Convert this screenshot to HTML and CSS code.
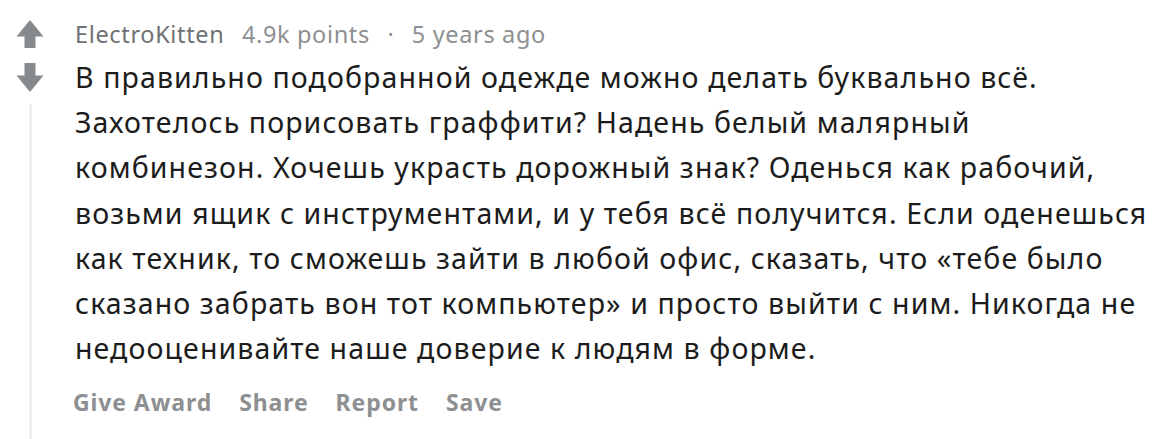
FILE: index.html
```html
<!DOCTYPE html>
<html lang="ru">
<head>
<meta charset="utf-8">
<link rel="stylesheet" href="styles.css">
</head>
<body>
<div class="comment">
  <div class="gutter">
    <div class="votes">
      <svg class="arrow" viewBox="0 0 28 28" width="28" height="28"><path d="M14 0 L27.5 16.5 L19.5 16.5 L19.5 28 L8.5 28 L8.5 16.5 L0.5 16.5 Z" fill="#878a8c"/></svg>
      <svg class="arrow" viewBox="0 0 28 29" width="28" height="29"><path d="M14 29 L27.5 12.5 L19.5 12.5 L19.5 0 L8.5 0 L8.5 12.5 L0.5 12.5 Z" fill="#878a8c"/></svg>
    </div>
    <div class="thread-line"></div>
  </div>
  <div class="main">
    <div class="meta">
      <span class="author">ElectroKitten</span>
      <span class="points">4.9k points</span>
      <span class="dot">·</span>
      <span class="time">5 years ago</span>
    </div>
    <p class="body">В правильно подобранной одежде можно делать буквально всё. Захотелось порисовать граффити? Надень белый малярный комбинезон. Хочешь украсть дорожный знак? Оденься как рабочий, возьми ящик с инструментами, и у тебя всё получится. Если оденешься как техник, то сможешь зайти в любой офис, сказать, что «тебе было сказано забрать вон тот компьютер» и просто выйти с ним. Никогда не недооценивайте наше доверие к людям в форме.</p>
    <div class="actions">
      <span class="action">Give Award</span>
      <span class="action">Share</span>
      <span class="action">Report</span>
      <span class="action">Save</span>
    </div>
  </div>
</div>
</body>
</html>
```
FILE: styles.css
```css
html, body {
  margin: 0;
  padding: 0;
  background: #ffffff;
}
body {
  font-family: "Noto Sans", "Open Sans", sans-serif;
  width: 1156px;
  height: 439px;
  overflow: hidden;
}
.comment {
  display: flex;
  padding-left: 16px;
  height: 439px;
}
.gutter {
  width: 28px;
  display: flex;
  flex-direction: column;
  align-items: center;
  margin-right: 31px;
}
.votes {
  display: flex;
  flex-direction: column;
  gap: 15px;
  padding-top: 20px;
}
.arrow {
  display: block;
}
.thread-line {
  width: 3px;
  flex: 1;
  background: #edeff1;
  margin-top: 12px;
}
.main {
  display: flex;
  flex-direction: column;
  width: 1080px;
}
.meta {
  margin-top: 17.5px;
  font-size: 23.5px;
  line-height: 32px;
  letter-spacing: 0.65px;
  display: flex;
  gap: 17.5px;
}
.author {
  color: #6f7173;
}
.points, .time, .dot {
  color: #8d8f91;
}
.body {
  margin: 5.5px 0 0 0;
  font-size: 28.5px;
  letter-spacing: 1.1px;
  line-height: 45.2px;
  color: #1c1c1c;
}
.actions {
  display: flex;
  gap: 27px;
  margin-top: 15px;
  margin-left: -2px;
  font-size: 23px;
  letter-spacing: 0.9px;
  font-weight: 700;
  color: #8d8f91;
}
```
